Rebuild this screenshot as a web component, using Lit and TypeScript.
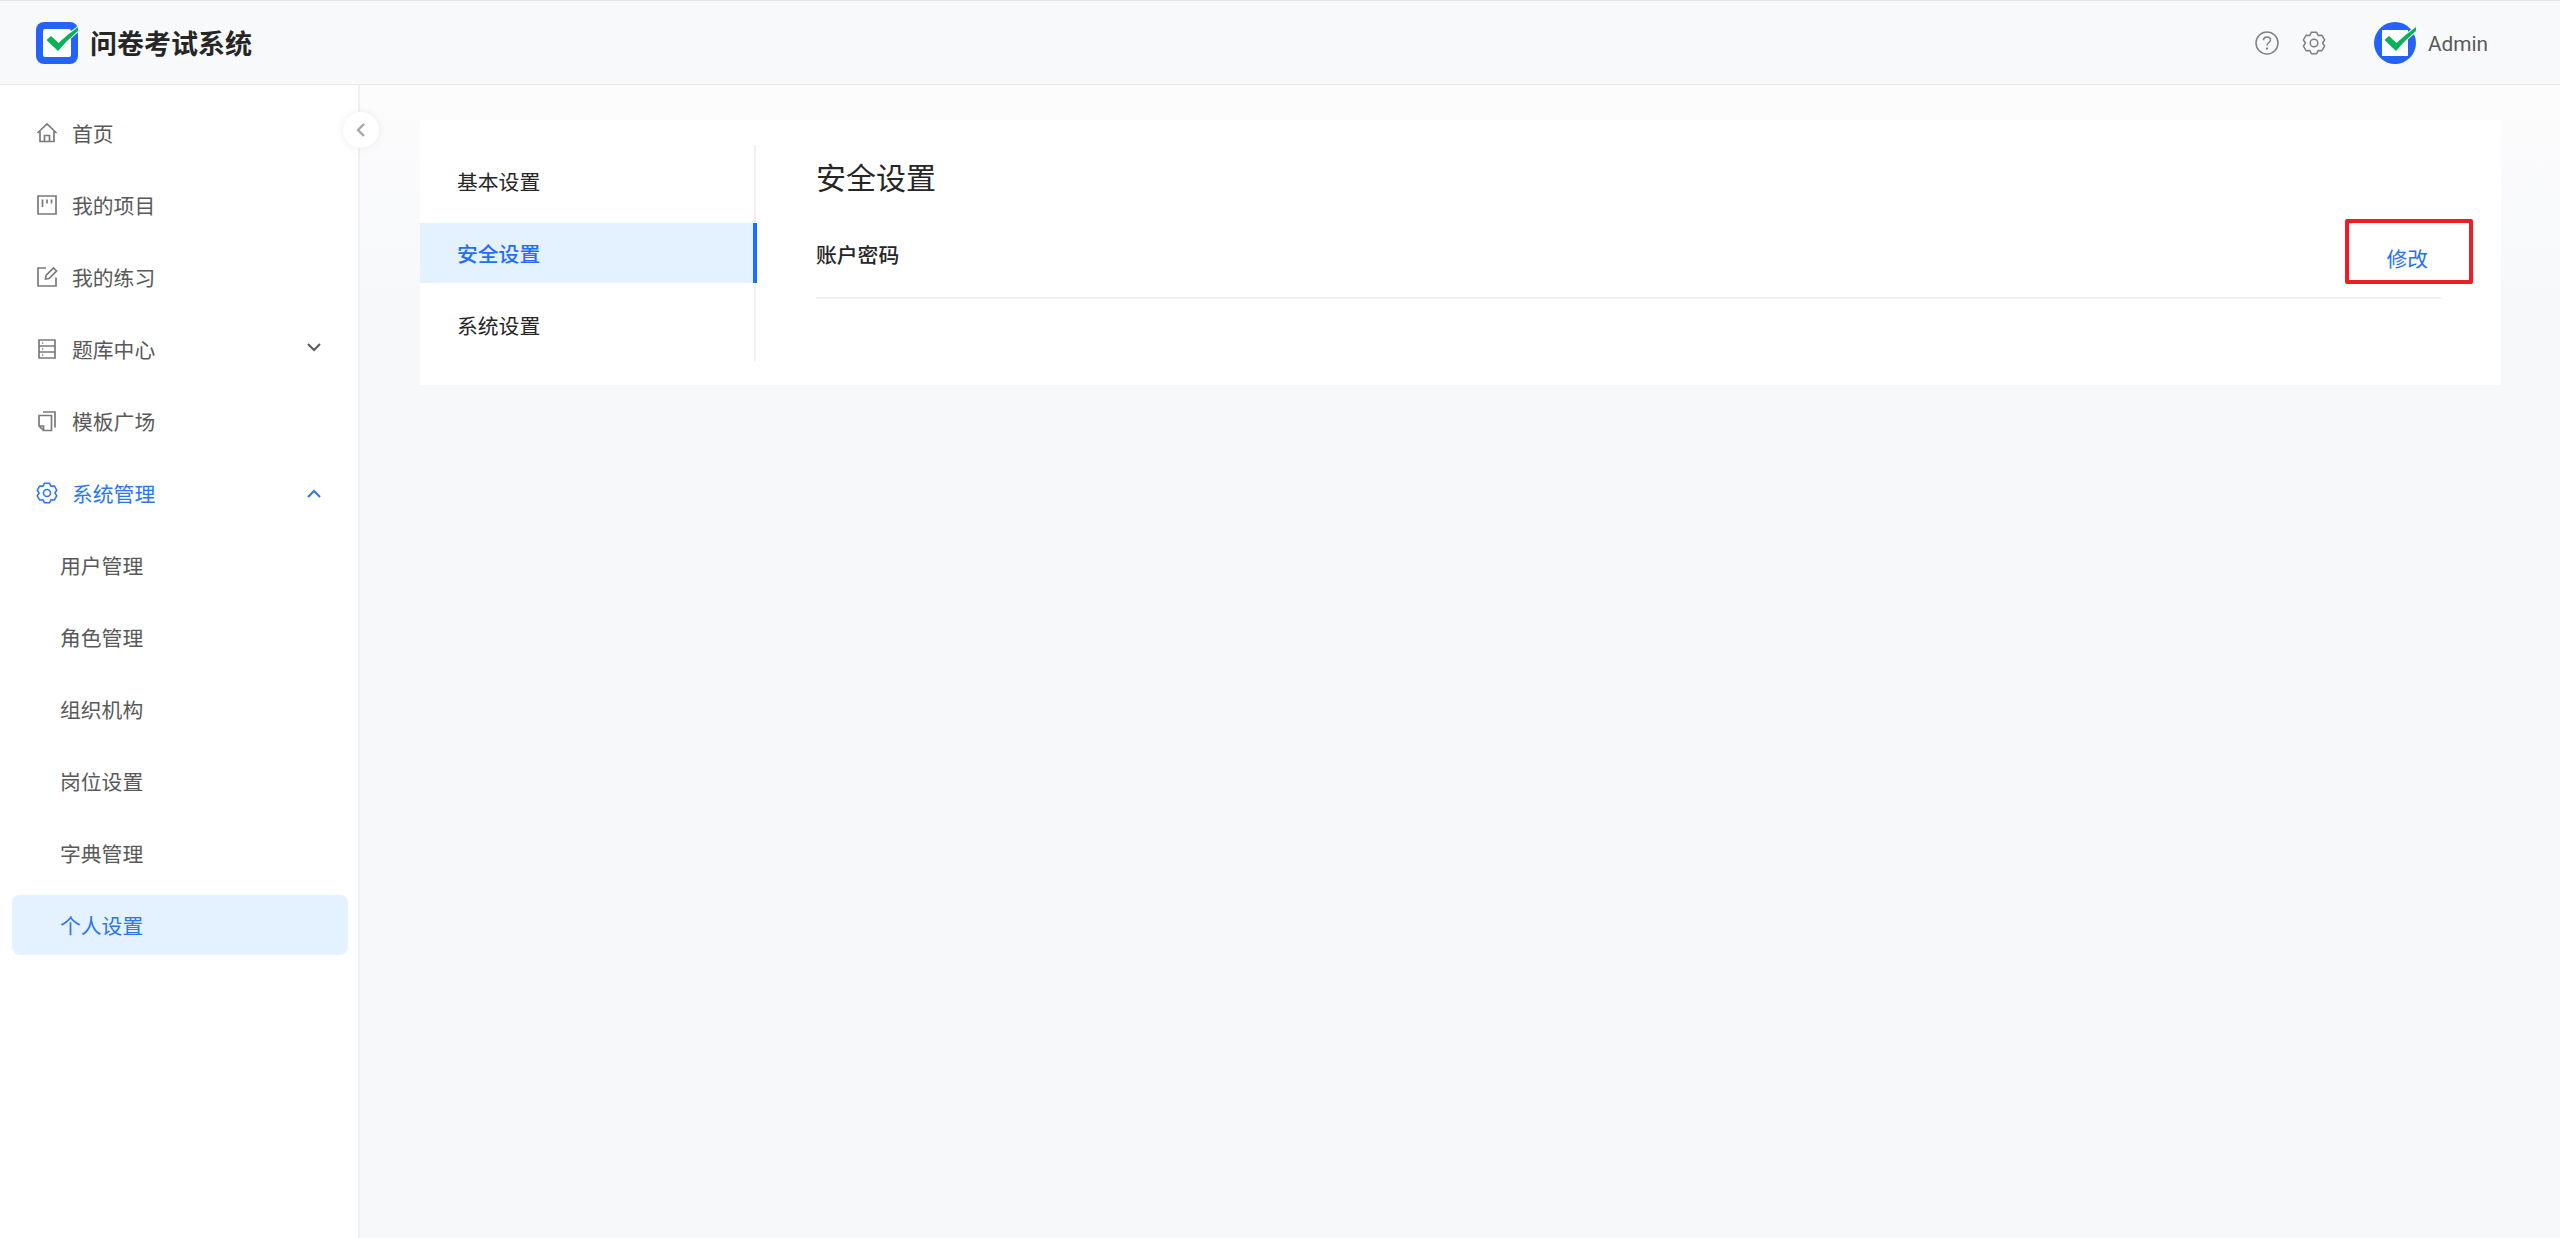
import { LitElement, html, css, svg } from "lit";
import { customElement } from "lit/decorators.js";

const checkPath = "M10.5 18 L15 14 L22.5 21 Q32 12 42 5 V9 Q31 18 22 29 Z";

// Six-lobed cog outline, centred in a 24 unit box.
function cogPath(): string {
  const pts: string[] = [];
  const at = (deg: number, r: number) => {
    const a = (deg * Math.PI) / 180;
    return `${(12 + r * Math.cos(a)).toFixed(2)} ${(12 + r * Math.sin(a)).toFixed(2)}`;
  };
  for (let k = 0; k < 6; k++) {
    const a = -90 + 60 * k;
    pts.push(at(a - 14, 11));
    pts.push(at(a + 14, 11));
    pts.push(at(a + 30, 8.6));
  }
  return "M" + pts.join(" L") + " Z";
}

const cog = svg`<path d=${cogPath()} stroke-linejoin="round"/><circle cx="12" cy="12" r="3.8"/>`;

const icons: Record<string, unknown> = {
  home: svg`<path d="M2.5 12 L12 3 L21.5 12 M5 10.5 V20.5 H19 V10.5 M9.5 20.5 V14.5 H14.5 V20.5" />`,
  board: svg`<path d="M3 3 H21 V21 H3 Z M7.5 6.5 V14 M12 6.5 V10.5 M16.5 6.5 V10.5" />`,
  edit: svg`<path d="M11 3 H3 V21 H21 V12.5 M10.5 14 L11 10.5 L18.5 3 L21.5 6 L14 13.5 Z" />`,
  bank: svg`<path d="M4 3 H20 V21 H4 Z M4 9 H20 M4 15 H20 M7 6 H8.2 M7 12 H8.2 M7 18 H8.2" />`,
  copy: svg`<path d="M8 3 H20 V18.5 M4 6.5 H16.5 V21.5 H8.5 L4 17 Z M4 17 H8.5 V21.5" />`,
  gear: svg`<g transform="translate(12 12) scale(.92) translate(-12 -12)">${cog}</g>`,
};

const menu = [
  { icon: "home", label: "首页" },
  { icon: "board", label: "我的项目" },
  { icon: "edit", label: "我的练习" },
  { icon: "bank", label: "题库中心", arrow: "down" },
  { icon: "copy", label: "模板广场" },
  { icon: "gear", label: "系统管理", arrow: "up", open: true },
  { label: "用户管理" },
  { label: "角色管理" },
  { label: "组织机构" },
  { label: "岗位设置" },
  { label: "字典管理" },
  { label: "个人设置", active: true },
];

@customElement("app-root")
export class AppRoot extends LitElement {
  static styles = css`
    :host {
      display: flex;
      flex-direction: column;
      width: 100%;
      height: 1238px;
      overflow: hidden;
      font-family: "Noto Sans CJK SC", "Noto Sans", sans-serif;
      font-size: 20.8px;
      color: #262626;
      background: #fff;
    }
    header {
      box-sizing: border-box;
      height: 85px;
      flex: none;
      display: flex;
      align-items: center;
      border-top: 1px solid #e3e5e3;
      border-bottom: 1px solid #e8eaec;
      background: #f8f9fb;
      padding: 0 0 0 36px;
    }
    .logo { width: 42px; height: 42px; display: block; flex: none; }
    .brand {
      margin-left: 12px;
      font-size: 27px;
      font-weight: 700;
      color: #262626;
      line-height: 42px;
    }
    .tools { margin-left: auto; display: flex; align-items: center; }
    .tool { display: block; fill: none; stroke: #808080; stroke-width: 1.5; }
    .tool.help { width: 24px; height: 24px; margin-right: 23px; }
    .tool.set { width: 24px; height: 24px; margin-right: 48px; }
    .avatar { width: 42px; height: 42px; display: block; }
    .user {
      margin-left: 12px;
      margin-right: 72px;
      padding-top: 2px;
      font-family: Roboto, sans-serif;
      font-size: 20.8px;
      color: #595959;
    }
    .body { flex: 1; display: flex; min-height: 0; position: relative; }
    aside {
      box-sizing: border-box;
      width: 360px;
      flex: none;
      background: #fff;
      border-right: 2px solid #eff0f2;
      padding: 18px 12px 0;
      display: flex;
      flex-direction: column;
      gap: 12px;
    }
    .item {
      box-sizing: border-box;
      width: 336px;
      height: 60px;
      flex: none;
      display: flex;
      align-items: center;
      padding-left: 23px;
      color: #595959;
      border-radius: 8px;
      font-size: 20.8px;
    }
    .item svg.ic {
      width: 24px;
      height: 24px;
      flex: none;
      margin-right: 13px;
      fill: none;
      stroke: #7a7a7a;
      stroke-width: 1.7;
    }
    .item.sub { padding-left: 48px; }
    .item.open { color: #2a76f6; }
    .item.open svg.ic, .item.open svg.arrow { stroke: #2a76f6; }
    .item.active { background: #e4f1fe; color: #2a76f6; }
    svg.arrow {
      width: 16px;
      height: 16px;
      margin-left: auto;
      margin-right: 26px;
      fill: none;
      stroke: #595959;
      stroke-width: 2;
    }
    .collapse {
      position: absolute;
      left: 343px;
      top: 27px;
      width: 36px;
      height: 36px;
      border-radius: 50%;
      background: #fff;
      box-shadow: 0 0 8px rgba(0, 0, 0, 0.07);
      display: flex;
      align-items: center;
      justify-content: center;
    }
    .collapse svg { width: 12px; height: 16px; fill: none; stroke: #a8a8a8; stroke-width: 2.4; }
    main {
      flex: 1;
      min-width: 0;
      background: linear-gradient(to bottom, #fcfcfd 0, #f7f8fa 220px);
      padding: 35px 59px 0 60px;
    }
    .card {
      display: flex;
      background: #fff;
      height: 265px;
      box-sizing: border-box;
      padding: 25px 0 24px;
      position: relative;
    }
    .tabs {
      box-sizing: border-box;
      width: 336px;
      flex: none;
      border-right: 2px solid #f0f1f3;
      padding: 6px 0;
      display: flex;
      flex-direction: column;
      gap: 12px;
    }
    .tab {
      box-sizing: border-box;
      height: 60px;
      display: flex;
      align-items: center;
      padding-left: 37px;
      color: #262626;
      width: 336px;
    }
    .tab.on {
      width: 337px;
      background: #e4f1fe;
      color: #1f6fff;
      font-weight: 500;
      border-right: 4px solid #1a6fff;
    }
    .pane { flex: 1; min-width: 0; padding: 0 60px; }
    h2 {
      margin: 0;
      font-size: 30px;
      font-weight: 400;
      line-height: 40px;
      padding-top: 11px;
      color: #262626;
    }
    .row {
      box-sizing: border-box;
      margin-top: 14px;
      height: 89px;
      display: flex;
      align-items: center;
      justify-content: space-between;
      border-bottom: 2px solid #f0f0f0;
    }
    .row .name { font-weight: 500; color: #262626; padding-top: 1px; }
    .row .edit { color: #1f6fff; padding-right: 13px; padding-top: 9px; }
    .mark {
      position: absolute;
      left: 1925px;
      top: 99px;
      box-sizing: border-box;
      width: 128px;
      height: 65px;
      border: 4px solid #ee1c25;
      border-radius: 2px;
    }
  `;

  private logo(round: boolean) {
    return html`<svg class=${round ? "avatar" : "logo"} viewBox="0 0 42 42">
      ${round
        ? svg`<circle cx="21" cy="21" r="21" fill="#2463f6"/><rect x="8" y="8" width="26" height="26" fill="#fff"/>`
        : svg`<rect width="42" height="42" rx="8" fill="#2463f6"/><rect x="7" y="7" width="28" height="28" rx="2" fill="#fff"/>`}
      <path d=${checkPath} fill="#fff" stroke="#fff" stroke-width="2"/>
      <path d=${checkPath} fill="#07b356"/>
    </svg>`;
  }

  render() {
    return html`
      <header>
        ${this.logo(false)}
        <div class="brand">问卷考试系统</div>
        <div class="tools">
          <svg class="tool help" viewBox="0 0 24 24">
            <circle cx="12" cy="12" r="11"/>
            <path d="M8.5 9.3 C8.5 7 10.2 6 12 6 C14 6 15.5 7.3 15.5 9 C15.5 11.5 12 11.5 12 14.5" />
            <path d="M12 16.6 V18.4" stroke-width="2"/>
          </svg>
          <svg class="tool set" viewBox="0 0 24 24">${cog}</svg>
          ${this.logo(true)}
          <div class="user">Admin</div>
        </div>
      </header>
      <div class="body">
        <aside>
          ${menu.map(
            (m) => html`<div class="item ${m.icon ? "" : "sub"} ${m.open ? "open" : ""} ${m.active ? "active" : ""}">
              ${m.icon ? html`<svg class="ic" viewBox="0 0 24 24">${icons[m.icon]}</svg>` : ""}
              <span>${m.label}</span>
              ${m.arrow
                ? html`<svg class="arrow" viewBox="0 0 16 16"><path d=${m.arrow === "down" ? "M2 3 L8 9 L14 3" : "M2 12 L8 6 L14 12"} /></svg>`
                : ""}
            </div>`
          )}
        </aside>
        <div class="collapse"><svg viewBox="0 0 12 16"><path d="M9 2 L3 8 L9 14" /></svg></div>
        <main>
          <section class="card">
            <nav class="tabs">
              <div class="tab">基本设置</div>
              <div class="tab on">安全设置</div>
              <div class="tab">系统设置</div>
            </nav>
            <div class="pane">
              <h2>安全设置</h2>
              <div class="row">
                <span class="name">账户密码</span>
                <span class="edit">修改</span>
              </div>
            </div>
            <div class="mark"></div>
          </section>
        </main>
      </div>
    `;
  }
}
